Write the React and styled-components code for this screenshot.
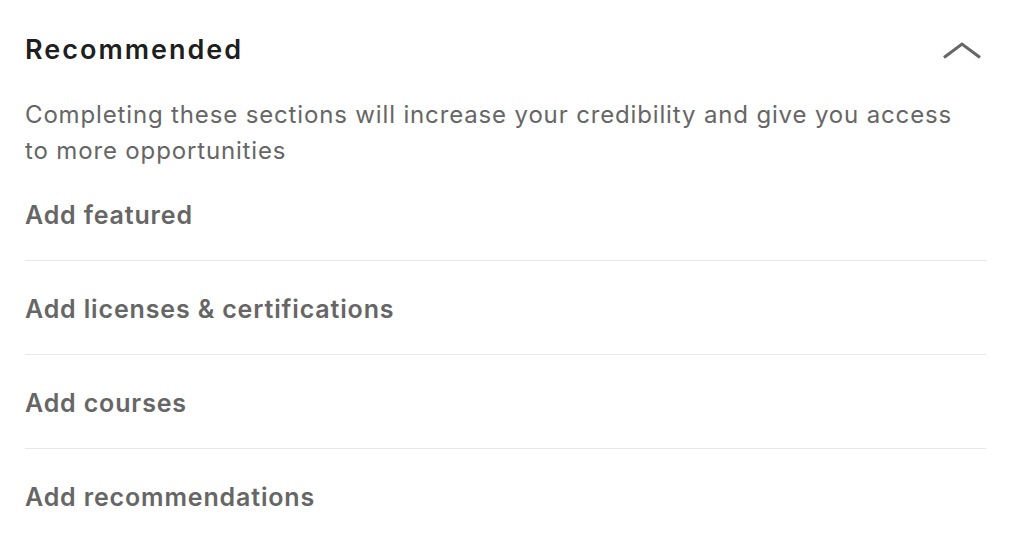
import styled, { createGlobalStyle } from 'styled-components'

const GlobalStyle = createGlobalStyle`
  body {
    margin: 0;
    background: #ffffff;
    font-family: Inter, "Noto Sans", "Liberation Sans", sans-serif;
    -webkit-font-smoothing: antialiased;
  }
`

const Card = styled.section`
  padding: 32px 38px 0 25px;
  background: #fff;
`

const Header = styled.header`
  display: flex;
  align-items: center;
  justify-content: space-between;
`

const Title = styled.h2`
  margin: 0;
  font-size: 27px;
  line-height: 36px;
  font-weight: 600;
  letter-spacing: 2px;
  color: rgba(0, 0, 0, 0.9);
`

const Toggle = styled.button`
  display: flex;
  align-items: center;
  justify-content: center;
  padding: 0;
  margin-right: 4px;
  border: 0;
  background: none;
  color: #666;
  cursor: pointer;
`

const Description = styled.p`
  max-width: 945px;
  margin: 29px 0 -2px;
  font-size: 24px;
  line-height: 36px;
  letter-spacing: 0.85px;
  color: #666;
`

const List = styled.ul`
  list-style: none;
  margin: 0;
  padding: 0;
`

const Item = styled.li`
  padding: 33px 0 30px;
  font-size: 25px;
  line-height: 30px;
  font-weight: 600;
  letter-spacing: 0.85px;
  color: #666;
  border-bottom: ${({ $last }) => ($last ? '0' : '1px solid #e8e8e8')};
`

const ChevronUp = () => (
  <svg width="40" height="18" viewBox="0 0 40 18" fill="none">
    <polyline
      points="2,16.5 20,3 38,16.5"
      stroke="currentColor"
      strokeWidth="3"
      strokeLinecap="butt"
      strokeLinejoin="miter"
    />
  </svg>
)

const items = [
  'Add featured',
  'Add licenses & certifications',
  'Add courses',
  'Add recommendations',
]

export default function App() {
  return (
    <>
      <GlobalStyle />
      <Card>
        <Header>
          <Title>Recommended</Title>
          <Toggle aria-label="Collapse">
            <ChevronUp />
          </Toggle>
        </Header>
        <Description>
          Completing these sections will increase your credibility and give you access
          to more opportunities
        </Description>
        <List>
          {items.map((label, i) => (
            <Item key={label} $last={i === items.length - 1}>
              {label}
            </Item>
          ))}
        </List>
      </Card>
    </>
  )
}
